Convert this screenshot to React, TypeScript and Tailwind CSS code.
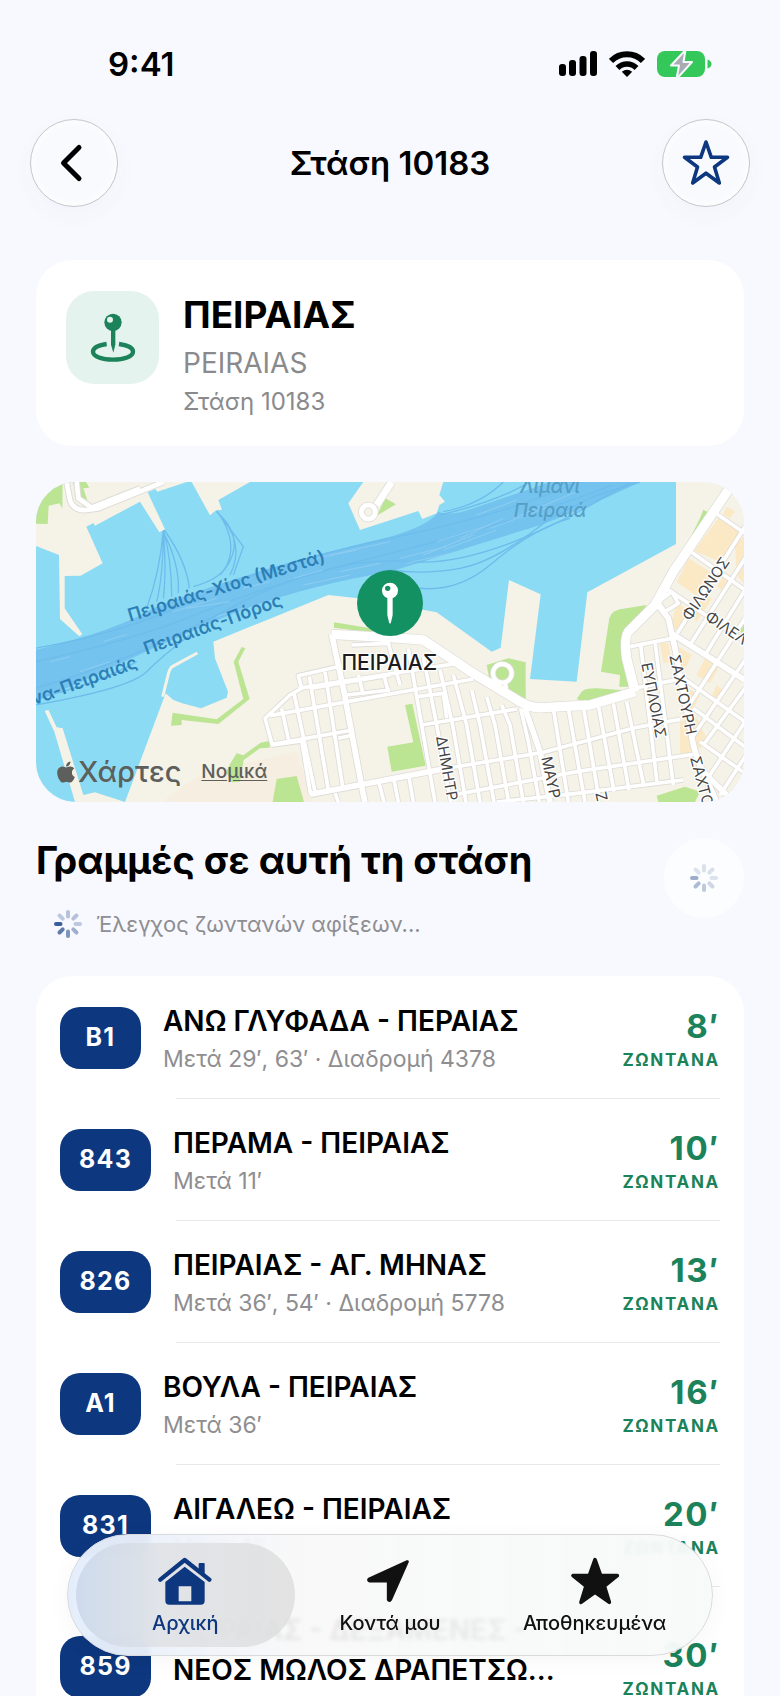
import type { ReactNode } from 'react'
import { FaApple } from 'react-icons/fa'

interface Arrival {
  line: string
  title: string
  detail: string
  minutes: number
}

const ARRIVALS: Arrival[] = [
  { line: 'B1', title: 'ΑΝΩ ΓΛΥΦΑΔΑ - ΠΕΡΑΙΑΣ', detail: 'Μετά 29′, 63′ · Διαδρομή 4378', minutes: 8 },
  { line: '843', title: 'ΠΕΡΑΜΑ - ΠΕΙΡΑΙΑΣ', detail: 'Μετά 11′', minutes: 10 },
  { line: '826', title: 'ΠΕΙΡΑΙΑΣ - ΑΓ. ΜΗΝΑΣ', detail: 'Μετά 36′, 54′ · Διαδρομή 5778', minutes: 13 },
  { line: 'A1', title: 'ΒΟΥΛΑ - ΠΕΙΡΑΙΑΣ', detail: 'Μετά 36′', minutes: 16 },
  { line: '831', title: 'ΑΙΓΑΛΕΩ - ΠΕΙΡΑΙΑΣ', detail: 'Μετά 41′', minutes: 20 },
  { line: '859', title: 'ΠΕΙΡΑΙΑΣ - ΔΕΞΑΜΕΝΕΣ - ΝΕΟΣ ΜΩΛΟΣ ΔΡΑΠΕΤΣΩ...', detail: 'Μετά 52′', minutes: 30 },
]

const PARKS = [
  'M15 21H98L97 100L88 85L56 92L53 147L15 146Z',
  'M128 21H168L178 38L160 40L172 76L140 60Z',
  'M1066 70L1098 88L1040 122Z',
  'M912 442L1035 462L1025 472L912 458Z',
  'M635 516L646 520L625 560L659 672L565 747L455 735V750L423 752L428 713L560 733L640 672L611 560Z',
  'M588 892L604 860L620 835L640 841L692 803L722 797L718 818L690 820L641 855L630 920L606 922Z',
  'M740 912L800 903L822 981H728Z',
  'M1072 815L1150 802L1125 690L1147 686L1187 872L1085 890Z',
  'M1370 570L1435 550L1487 562V675L1380 622Z',
  'M1850 390L1770 403Q1745 408 1738 430L1713 590L1770 600L1768 635H1795V480Z',
  'M1640 672L1655 650Q1665 640 1700 640L1808 648L1680 686Z',
  'M2010 130L2020 104L2040 115L2005 180L1884 345L1960 230Z',
  'M1880 962L1965 935L2010 950L1995 981H1885Z',
  'M2125 465L2145 425V485Z',
]

const SHOPS = [
  'M2065 130L2132 172L2075 262L1993 228Z',
  'M2090 95L2115 110L2098 130L2080 118Z',
  'M1975 250L2055 300L2015 372L1940 322Z',
  'M1940 385L1985 410L1945 465L1920 460Z',
  'M2085 290L2110 310L2085 355L2062 335Z',
  'M2010 350L2045 372L2000 440L1980 420Z',
  'M2115 210L2145 180V330L2120 300Z',
  'M1890 505H1915L1925 560L1900 565Z',
  'M1935 510L1985 540L1960 590L1935 580Z',
  'M2030 540L2070 570L2040 625L2000 600Z',
  'M2060 630L2085 650L2065 680L2045 665Z',
  'M1955 630L2010 660L1985 710L1970 700Z',
  'M1950 740L2000 730L2035 800L1980 840L1950 835Z',
]

const SIDE_STREETS = [
  // blocks west of the stop
  'M935 572L805 602L815 640L780 660L705 730L727 810L815 798L842 958',
  'M805 640L1300 562',
  'M720 722L1330 612',
  'M727 808L968 765',
  'M840 640L1080 600',
  'M755 700L778 806',
  'M792 655L855 950',
  'M838 605L895 945',
  'M885 590L938 935',
  'M950 660L1080 645',
  'M925 790L970 780',
  'M965 510L1075 505L1110 630',
  'M985 600L1000 660',
  'M1060 595L1075 650',
  'M915 955L925 981',
  'M1045 915L1062 981',
  'M1090 905L1105 981',
  'M1135 895L1150 981',
  // east-west streets behind the coast
  'M1160 665L1240 655L1250 730',
  'M1175 750L1460 702',
  'M840 958L1220 885L1540 832L1820 757L1950 733',
  'M1280 958L1640 890L1990 838',
  'M1400 981L1640 955L1960 915',
  // north-south streets
  'M1135 520L1175 750L1215 981',
  'M1180 545L1220 750L1262 981',
  'M1230 585L1268 750L1308 981',
  'M1270 600L1310 750L1350 981',
  'M1325 645L1350 750L1392 981',
  'M1370 665L1395 750L1436 981',
  'M1415 690L1440 750L1480 981',
  'M1472 700L1495 800L1528 981',
  'M1570 700L1615 981',
  'M1615 700L1665 981',
  'M1660 695L1705 960',
  'M1705 690L1752 950',
  'M1750 685L1797 945',
  'M1790 680L1842 935',
  'M1832 510L1882 930',
  'M1875 500L1930 930',
  'M1800 515L1925 490',
  'M1810 640L1960 610',
  // north-eastern grid
  'M1942 475L2145 155',
  'M1980 510L2145 250',
  'M2025 540L2145 345',
  'M1965 710L2145 430',
  'M1985 790L2145 555',
  'M2020 810L2145 640',
  'M2030 915L2145 740',
  'M2070 960L2145 845',
  'M2062 118L2145 175',
  'M1985 232L2145 345',
  'M1912 342L2145 500',
  'M1960 610L2145 740',
  'M1990 700L2145 815',
  'M2010 800L2145 895',
  'M1885 380L1925 350L1945 385L1905 410Z',
]

const MAIN_STREETS = [
  'M905 478L940 640L1000 960L1005 981',
  'M842 958L1240 882',
  'M1485 700L1530 830L1560 981',
  'M1880 385L1915 430L1935 520L1990 810L2005 860L2060 981',
  'M1925 475L2145 615',
  'M2010 880L2100 970',
]

const COAST_ROAD = 'M905 478L1080 488L1180 495L1330 595L1470 680Q1500 700 1540 698L1680 690L1815 650'
const AVENUE = 'M1815 650L1790 550Q1780 480 1800 465L1875 390L1930 290L2105 30'

const WAKES = [
  'M400 165Q400 300 380 380M400 165Q410 290 400 370M402 170Q425 260 425 365M402 175Q450 270 445 355M403 165Q470 260 478 340M400 165Q390 290 350 400',
  'M560 110Q650 200 600 300M560 110Q660 200 570 300M562 110Q620 190 595 260Q580 310 490 335M560 108L640 215L610 300',
  'M15 690Q300 640 350 590T480 480M15 670Q200 630 320 560',
  'M1080 285Q1180 300 1290 280T1560 130L1700 60L1830 21',
  'M1080 320Q1250 380 1380 270T1620 130',
  'M1240 110Q1350 90 1420 21M1230 120Q1400 80 1500 21',
  'M15 520Q300 470 500 370T1080 190T1640 21M15 560Q300 500 520 410T1100 230T1750 30',
  'M15 640Q300 560 600 400T1140 260T1800 21',
]

const FOAM = [
  'M60 560L120 545M150 590L240 560M220 500L290 478M430 410L560 370M470 400L600 380M560 425L640 400M640 340L720 320',
  'M790 310L880 285M820 330L960 300M860 250L980 225M900 240L1080 200M930 290L1050 265',
  'M1110 250L1250 215M1130 265L1260 235M1180 240L1330 180M1220 200L1380 150M1240 225L1400 165M1290 190L1420 130M1340 120L1460 75M1380 160L1560 95M1450 130L1640 50',
]

interface StreetLabel {
  text: string
  x: number
  y: number
  angle: number
}

const STREET_LABELS: StreetLabel[] = [
  { text: 'ΦΙΛΩΝΟΣ', x: 1980, y: 440, angle: -56 },
  { text: 'ΦΙΛΕΛ', x: 2022, y: 432, angle: 34 },
  { text: 'ΕΥΠΛΟΙΑΣ', x: 1834, y: 566, angle: 79 },
  { text: 'ΣΑΧΤΟΥΡΗ', x: 1918, y: 542, angle: 78 },
  { text: 'ΣΑΧΤΟ', x: 1980, y: 848, angle: 75 },
  { text: 'ΔΗΜΗΤΡ', x: 1218, y: 786, angle: 80 },
  { text: 'ΜΑΥΡ', x: 1534, y: 848, angle: 78 },
  { text: 'Ζ', x: 1696, y: 954, angle: 78 },
]

const StatusBar = () => (
  <div className="flex items-center justify-between pt-12 pr-[68px] pb-[39px] pl-[108px]">
    <span className="text-[33px] leading-8 font-semibold">9:41</span>
    <div className="flex items-center gap-3">
      <svg width="38" height="26" viewBox="0 0 38 26" aria-hidden="true">
        <rect x="0" y="13" width="7" height="12" rx="3" />
        <rect x="10" y="9" width="7" height="16" rx="3" />
        <rect x="20.500" y="5" width="7" height="20" rx="3" />
        <rect x="31" y="0" width="7" height="25" rx="3" />
      </svg>
      <svg width="36" height="26" viewBox="0 0 36 26" fill="none" stroke="#000" strokeWidth="6" aria-hidden="true">
        <path d="M2 10A22.500 22.500 0 0 1 34 10" />
        <path d="M8.500 17A13.500 13.500 0 0 1 27.500 17" strokeWidth="5.500" />
        <path d="M18 26L12.800 20.800Q18 16.800 23.200 20.800Z" fill="#000" stroke="none" />
      </svg>
      <svg width="55" height="26" viewBox="0 0 55 26" aria-hidden="true">
        <rect x="0" y="0" width="48" height="26" rx="8" fill="#34c759" />
        <path d="M50.500 8.500Q54.500 10 54.500 13T50.500 17.500Z" fill="#34c759" />
        <path
          d="M28.500 -1L14 14.500H22L19.500 28L35 11H26.500Z"
          fill="#a9adb3"
          stroke="#f8f9fe"
          strokeWidth="2"
          strokeLinejoin="round"
        />
      </svg>
    </div>
  </div>
)

interface GlassButtonProps {
  label: string
  children: ReactNode
}

const GlassButton = ({ label, children }: GlassButtonProps) => (
  <button
    type="button"
    aria-label={label}
    className="flex size-[88px] shrink-0 items-center justify-center rounded-full border border-[#c6c7cb] bg-[#f9fafe] shadow-[0_8px_24px_rgba(90,90,160,0.03),inset_0_0_12px_#ffffff]"
  >
    {children}
  </button>
)

const SPOKE_OPACITY = [0.25, 0.28, 0.28, 0.25, 0.38, 0.52, 0.65, 0.8]

const Spinner = ({ faded = false }: { faded?: boolean }) => (
  <svg
    width="28"
    height="28"
    viewBox="-14 -14 28 28"
    className={faded ? 'shrink-0 opacity-50' : 'shrink-0'}
    stroke="#0d377e"
    strokeWidth="4"
    strokeLinecap="round"
    aria-hidden="true"
  >
    {SPOKE_OPACITY.map((opacity, i) => (
      <line key={i} x1="-7.500" y1="0" x2="-12" y2="0" strokeOpacity={opacity} transform={`rotate(${(i - 7) * 45})`} />
    ))}
  </svg>
)

const StopCard = () => (
  <section className="flex items-start gap-6 rounded-[36px] bg-white px-[30px] pt-[31px] pb-[29px]">
    <div className="flex size-[93px] shrink-0 items-center justify-center rounded-[28px] bg-[#e4f3ed]">
      <svg width="46" height="50" viewBox="207 195 138 150" aria-hidden="true">
        <path
          d="M257 288C230 292 216 300 216 311C216 325 243 335 276 335S336 325 336 311C336 300 322 292 294 288"
          fill="none"
          stroke="#1b825a"
          strokeWidth="13"
        />
        <path d="M270 245H283V290L277 314L270 290Z" fill="#1b825a" />
        <circle cx="276" cy="223" r="26" fill="#1b825a" />
        <circle cx="267" cy="215" r="9" fill="#e4f3ed" />
      </svg>
    </div>
    <div className="flex flex-col gap-1">
      <h2 className="text-[37px] leading-[48px] font-bold">ΠΕΙΡΑΙΑΣ</h2>
      <p className="text-[28px] leading-10 text-[#8a8a8d]">PEIRAIAS</p>
      <p className="text-[24px] leading-[30px] text-[#8a8a8d]">Στάση 10183</p>
    </div>
  </section>
)

const StopMap = () => (
  <section className="relative overflow-hidden rounded-[40px]">
    {/* Three drawing units to the pixel */}
    <svg
      viewBox="15 21 2130 960"
      preserveAspectRatio="xMidYMid slice"
      className="block h-80 w-full"
      role="img"
      aria-label="ΠΕΙΡΑΙΑΣ"
    >
      <rect x="15" y="21" width="2130" height="960" fill="#f5f2e7" />
      <path d="M400 981Q480 900 620 870T800 830L840 960L850 981Z" fill="#f6eee0" />

      {/* Water */}
      <path
        d="M15 21H1938V207L1672 352L1640 620L1500 612L1532 358L1437 315L1412 518L1385 530L1220 412L985 370L895 360L550 500L555 550L594 650L590 668L513 700L457 685L430 675L407 655L285 981H15Z"
        fill="#8cdbf4"
      />
      <path
        d="M15 525Q250 470 380 395Q550 330 720 280T1080 185Q1200 150 1225 110Q1260 125 1330 100L1560 21H1830Q1600 130 1500 160T1290 225T1080 290Q780 340 550 440T200 600L15 680Z"
        fill="#74c3ee"
      />
      {WAKES.map((d) => (
        <path key={d} d={d} fill="none" stroke="#6dbcec" strokeWidth="4" />
      ))}
      {FOAM.map((d) => (
        <path key={d} d={d} fill="none" stroke="#8fcdf2" strokeWidth="3" />
      ))}

      {/* Docks and piers */}
      <g fill="#f5f2e7">
        <path d="M15 21H470L382 50L376 42L353 52L405 163L388 172L330 80L195 152L190 144L169 155L218 265L152 302L104 303V400L157 478L148 484L90 432L87 240L15 212Z" />
        <path d="M485 21H660L565 75L576 104L558 106L540 121Z" />
        <path d="M1000 21L955 85L990 165L1165 108L1177 132L1220 115L1228 90L1245 80L1228 60L1240 21Z" />
        <path d="M44 708L55 704L80 757L98 760L160 960L195 952L285 981H135L73 770Z" />
      </g>
      <path d="M502 534L428 574Q418 580 413 605L398 665" fill="none" stroke="#f5f2e7" strokeWidth="9" />

      {PARKS.map((d) => (
        <path key={d} d={d} fill="#bbe493" />
      ))}
      {SHOPS.map((d) => (
        <path key={d} d={d} fill="#fbe8c4" />
      ))}

      {/* Streets, casing first */}
      <g fill="none" strokeLinejoin="round">
        <g stroke="#dedcd8">
          {SIDE_STREETS.map((d) => (
            <path key={d} d={d} strokeWidth="16" />
          ))}
          {MAIN_STREETS.map((d) => (
            <path key={d} d={d} strokeWidth="22" />
          ))}
          <path d={COAST_ROAD} strokeWidth="32" />
          <path d={AVENUE} strokeWidth="32" />
          <path d="M110 21L120 75Q130 108 170 105L205 100L400 21M140 21L145 70L185 98L330 40" strokeWidth="20" />
          <path d="M1040 90L1085 21" strokeWidth="26" />
          <circle cx="1015" cy="111" r="21" strokeWidth="20" />
          <path d="M1425 620L1430 660M1395 610L1385 640" strokeWidth="18" />
          <circle cx="1417" cy="595" r="28" strokeWidth="18" />
        </g>
        <g stroke="#ffffff">
          {SIDE_STREETS.map((d) => (
            <path key={d} d={d} strokeWidth="11" />
          ))}
          {MAIN_STREETS.map((d) => (
            <path key={d} d={d} strokeWidth="17" />
          ))}
          <path d={COAST_ROAD} strokeWidth="28" />
          <path d={AVENUE} strokeWidth="28" />
          <path d="M110 21L120 75Q130 108 170 105L205 100L400 21M140 21L145 70L185 98L330 40" strokeWidth="14" />
          <path d="M1040 90L1085 21" strokeWidth="21" />
          <circle cx="1015" cy="111" r="21" strokeWidth="15" />
          <path d="M1425 620L1430 660M1395 610L1385 640" strokeWidth="13" />
          <circle cx="1417" cy="595" r="28" strokeWidth="13" />
        </g>
      </g>

      {/* Ferry lines and the harbour */}
      <g fill="#2c7fb6" fontSize="54" fontWeight="600">
        <text transform="translate(300 440) rotate(-17)">Πειραιάς-Χίος (Μεστά)</text>
        <text transform="translate(349 540) rotate(-20)">Πειραιάς-Πόρος</text>
        <text transform="translate(325 577) rotate(-20)" textAnchor="end">
          να-Πειραιάς
        </text>
      </g>
      <g fill="#559fc6" fontSize="57" fontStyle="italic" fontWeight="500" textAnchor="middle">
        <text x="1560" y="54">Λιμάνι</text>
        <text x="1560" y="126">Πειραιά</text>
      </g>

      <g fill="#454545" stroke="#ffffff" strokeWidth="8" strokeLinejoin="round" paintOrder="stroke" fontSize="45">
        {STREET_LABELS.map(({ text, x, y, angle }) => (
          <text key={text} transform={`translate(${x} ${y}) rotate(${angle})`}>
            {text}
          </text>
        ))}
      </g>

      {/* Stop marker */}
      <circle cx="1080" cy="384" r="99" fill="#149162" />
      <path d="M1072 365H1088V420L1083 442Q1080 450 1077 442L1072 420Z" fill="#ffffff" />
      <circle cx="1080" cy="347" r="24" fill="#ffffff" />
      <circle cx="1073" cy="340" r="8" fill="#149162" />
      <text
        x="1078"
        y="585"
        textAnchor="middle"
        fontSize="63"
        fontWeight="500"
        fill="#1c1c1e"
        stroke="#ffffff"
        strokeWidth="8"
        strokeLinejoin="round"
        paintOrder="stroke"
      >
        ΠΕΙΡΑΙΑΣ
      </text>
    </svg>

    <div className="absolute bottom-3 left-5 flex items-center gap-5 text-[#5c5f5c]">
      <span className="flex items-center text-[29px] leading-9 font-medium">
        <FaApple className="-ml-0.5 size-6" aria-hidden="true" />
        Χάρτες
      </span>
      <a href="#legal" className="text-[19px] leading-6 font-medium underline underline-offset-2">
        Νομικά
      </a>
    </div>
  </section>
)

const ArrivalRow = ({ line, title, detail, minutes }: Arrival) => (
  <li className="group">
    <a href={`#line-${line}`} className="flex min-h-[121px] items-center px-6 py-[23px]">
      <span
        className={`flex h-[62px] shrink-0 items-center justify-center rounded-[20px] bg-[#0d377e] text-[25px] font-bold tracking-wider text-white ${
          line.length > 2 ? 'w-[91px]' : 'w-[81px]'
        }`}
      >
        {line}
      </span>
      <span className="ml-[22px] flex min-w-0 flex-1 flex-col gap-0.5">
        <span className="line-clamp-2 text-[28px] leading-10 font-semibold">{title}</span>
        <span className="text-[23px] leading-8 text-[#8e8e91]">{detail}</span>
      </span>
      <span className="ml-6 flex shrink-0 flex-col items-end text-[#1b825a]">
        <span className="text-[33px] leading-[44px] font-bold tracking-wider">{minutes}′</span>
        <span className="text-[17px] leading-6 font-bold tracking-widest">ΖΩΝΤΑΝΑ</span>
      </span>
    </a>
    <div className="mr-6 ml-[140px] h-px bg-[#e8e9ec] group-last:hidden" />
  </li>
)

const HomeIcon = () => (
  <svg width="54" height="48" viewBox="386 291 162 144" fill="#0d377e" aria-hidden="true">
    <path d="M508 312Q508 309 511 309H523Q526 309 526 312V345L508 330Z" />
    <path d="M393 359L466 300L540 359" fill="none" stroke="#0d377e" strokeWidth="13" strokeLinecap="round" strokeLinejoin="round" />
    <path d="M408 366L466 320L526 366V422Q526 434 514 434H420Q408 434 408 422ZM448 379V424H486V379Z" fillRule="evenodd" />
  </svg>
)

const NearbyIcon = () => (
  <svg width="54" height="48" viewBox="1000 294 162 144" aria-hidden="true">
    <path
      d="M1133 308L1018 360Q1015 365 1020 366H1072Q1076 366 1076 370V422Q1079 427 1083 421Z"
      fill="#111"
      stroke="#111"
      strokeWidth="9"
      strokeLinejoin="round"
    />
  </svg>
)

const SavedIcon = () => (
  <svg width="54" height="48" viewBox="502 288 162 144" aria-hidden="true">
    <path
      d="M583 296L600 344H650L611 375L626 424L583 394L541 424L556 375L517 344H566Z"
      fill="#111"
      stroke="#111"
      strokeWidth="11"
      strokeLinejoin="round"
    />
  </svg>
)

const TABS = [
  { label: 'Αρχική', href: '#home', icon: <HomeIcon />, active: true },
  { label: 'Κοντά μου', href: '#nearby', icon: <NearbyIcon />, active: false },
  { label: 'Αποθηκευμένα', href: '#saved', icon: <SavedIcon />, active: false },
]

const TabBar = () => (
  <nav className="absolute inset-x-[67px] bottom-10 flex rounded-full border border-[#d9dadd] bg-linear-to-r from-[#e4edfb]/98 via-[#f8f8f8]/92 via-35% to-[#f7faf9]/95 px-[15px] py-2 shadow-[0_4px_24px_rgba(0,0,0,0.04)] backdrop-blur-[2px]">
    {TABS.map(({ label, href, icon, active }) => (
      <a
        key={label}
        href={href}
        aria-current={active ? 'page' : undefined}
        className={`relative flex h-[104px] flex-1 flex-col items-center pt-[14px] text-[20px] leading-7 font-medium ${
          active ? 'text-[#0d377e]' : 'text-[#111]'
        }`}
      >
        {active && (
          <span className="absolute -inset-x-[7px] inset-y-0 rounded-full bg-linear-to-r from-[#cbd8ea]/90 via-[#dfe1e4]/85 via-40% to-[#dddddd]/80" />
        )}
        <span className="relative">{icon}</span>
        <span className="relative mt-1">{label}</span>
      </a>
    ))}
  </nav>
)

export default function App() {
  return (
    <div className="relative flex h-screen flex-col overflow-hidden bg-[#f8f9fe] font-['Inter','Liberation_Sans',sans-serif] text-black">
      <StatusBar />

      <header className="flex items-center justify-between px-[30px]">
        <GlassButton label="Πίσω">
          <svg
            width="24"
            height="40"
            viewBox="0 0 24 40"
            className="mr-1.5"
            fill="none"
            stroke="#000"
            strokeWidth="5"
            strokeLinecap="round"
            strokeLinejoin="round"
            aria-hidden="true"
          >
            <path d="M20 4.500L4.500 20L20 35.500" />
          </svg>
        </GlassButton>
        <h1 className="text-[33px] leading-10 font-semibold">Στάση 10183</h1>
        <GlassButton label="Αποθήκευση στάσης">
          <svg width="50" height="50" viewBox="0 0 50 50" fill="none" stroke="#0d377e" strokeWidth="3.600" strokeLinejoin="round" aria-hidden="true">
            <path d="M25 4L30.300 19.300H46.500L33.500 29L38.300 45L25 35.200L11.700 45L16.500 29L3.500 19.300H19.700Z" />
          </svg>
        </GlassButton>
      </header>

      <main className="flex min-h-0 flex-1 flex-col gap-9 overflow-y-auto px-9 pt-[53px] [scrollbar-width:none] *:shrink-0">
        <StopCard />
        <StopMap />

        <section>
          <div className="flex items-start justify-between">
            <div>
              <h2 className="text-[38px] leading-[44px] font-bold">Γραμμές σε αυτή τη στάση</h2>
              <p className="mt-[26px] flex items-center gap-[14px] pl-[18px] text-[22px] leading-8 text-[#8e8e93]">
                <Spinner />
                Έλεγχος ζωντανών αφίξεων...
              </p>
            </div>
            <button
              type="button"
              aria-label="Ανανέωση"
              className="flex size-20 shrink-0 items-center justify-center rounded-full bg-[#fcfdff]"
            >
              <Spinner faded />
            </button>
          </div>

          <ul className="mt-9 rounded-[36px] bg-white pt-px">
            {ARRIVALS.map((arrival) => (
              <ArrivalRow key={arrival.line} {...arrival} />
            ))}
          </ul>
        </section>
      </main>

      <TabBar />
    </div>
  )
}
